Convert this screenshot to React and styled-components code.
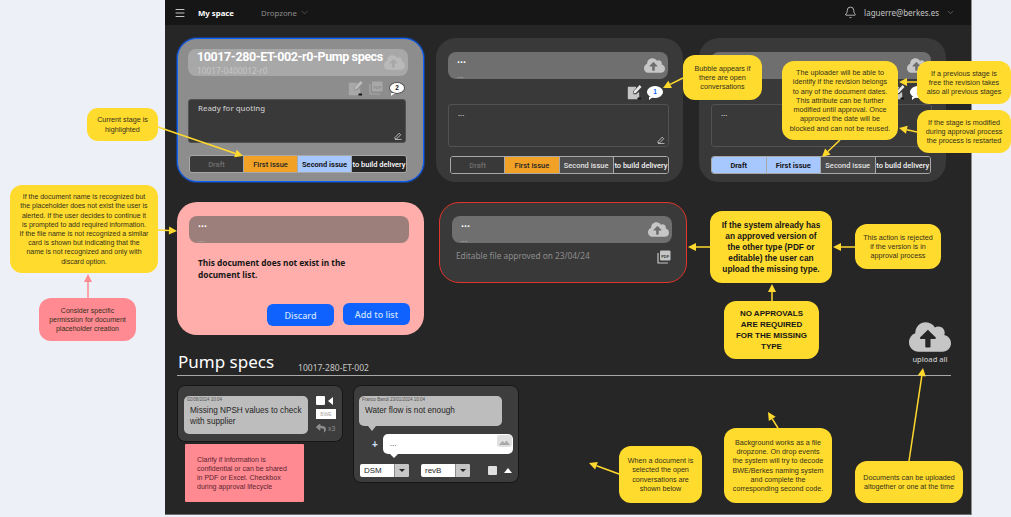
import React from "react";
import styled, { createGlobalStyle } from "styled-components";
import { FaCloudUploadAlt, FaReply } from "react-icons/fa";
import { Bell, ChevronDown, Menu } from "lucide-react";

const Global = createGlobalStyle`
  html, body { margin: 0; padding: 0; background: #edf1f7; }
  body { width: 1011px; height: 517px; overflow: hidden; font-family: "Noto Sans", sans-serif; }
`;

const Page = styled.div`
  position: relative;
  width: 1011px;
  height: 517px;
  overflow: hidden;
`;

const Panel = styled.main`
  box-sizing: border-box;
  margin-left: 165px;
  width: 807px;
  height: 515px;
  background: #262626;
  border-right: 1px solid #8d8d8d;
  border-bottom: 1px solid #6f6f6f;
`;

const Header = styled.header`
  display: flex;
  align-items: center;
  height: 25px;
  padding: 0 16px 0 9px;
  background: #161616;
  color: #fff;
`;

const Brand = styled.strong`
  margin-left: 12px;
  font-size: 7.8px;
  font-weight: 700;
`;

const Nav = styled.span`
  display: flex;
  align-items: center;
  gap: 2px;
  margin-left: 27px;
  font-size: 7.8px;
  color: #8d8d8d;
`;

const Account = styled.div`
  display: flex;
  align-items: center;
  margin-left: auto;
  font-size: 8px;
  color: #c6c6c6;
  gap: 7px;
`;

const Content = styled.div`
  padding: 13px 20px 0 12px;
`;

const CardRow = styled.section`
  display: flex;
  align-items: flex-start;
  gap: ${({ $gap }) => $gap}px;
  margin-top: ${({ $top = 0 }) => $top}px;
`;

const Card = styled.article`
  box-sizing: border-box;
  width: ${({ $w = 247 }) => $w}px;
  height: ${({ $h = 144 }) => $h}px;
  margin-left: ${({ $ml = 0 }) => $ml}px;
  padding: ${({ $pt = 13 }) => $pt}px ${({ $px = 11 }) => $px}px 0;
  border: 1px solid ${({ $line }) => $line || "transparent"};
  border-radius: 20px;
  background: ${({ $bg }) => $bg};
  box-shadow: ${({ $glow }) => ($glow ? "0 0 0 1px rgba(15, 98, 254, 0.4)" : "none")};
`;

const TitleBox = styled.div`
  position: relative;
  box-sizing: border-box;
  width: 220px;
  height: 27px;
  padding: 0 9px;
  border-radius: 8px;
  background: ${({ $bg }) => $bg};
  color: #fff;
`;

const DocName = styled.div`
  font-family: ${({ $big }) => ($big ? "Roboto, sans-serif" : "inherit")};
  font-size: ${({ $big }) => ($big ? 12.5 : 11)}px;
  font-weight: ${({ $big }) => ($big ? 700 : 600)};
  letter-spacing: ${({ $big }) => ($big ? "-0.4px" : "0")};
  line-height: ${({ $big }) => ($big ? 15 : 14)}px;
  white-space: nowrap;
`;

const DocCode = styled.div`
  position: absolute;
  left: 9px;
  bottom: ${({ $big }) => ($big ? 0 : -1)}px;
  font-size: ${({ $big }) => ($big ? 8.3 : 6)}px;
  color: #c6c6c6;
`;

const CloudSlot = styled.span`
  position: absolute;
  right: 3px;
  top: 3px;
  display: flex;
  color: ${({ $c }) => $c};
`;

const Tools = styled.div`
  box-sizing: border-box;
  display: flex;
  justify-content: flex-end;
  align-items: center;
  width: 220px;
  gap: ${({ $gap = 5 }) => $gap}px;
  height: ${({ $h = 25 }) => $h}px;
  padding-right: ${({ $pr = 5 }) => $pr}px;
`;

const Bubble = styled.span`
  position: relative;
  display: flex;
  align-items: center;
  justify-content: center;
  box-sizing: border-box;
  width: 16px;
  height: 12px;
  border-radius: 50%;
  background: #fff;
  border: 1px solid ${({ $ring }) => $ring || "#fff"};
  font: 700 6.5px "Liberation Sans", sans-serif;
  color: ${({ $c }) => $c};

  &::after {
    content: "";
    position: absolute;
    left: 1px;
    bottom: -3px;
    border-top: 3px solid #fff;
    border-right: 4px solid transparent;
  }
`;

const NoteArea = styled.div`
  position: relative;
  box-sizing: border-box;
  width: ${({ $w = 221 }) => $w}px;
  height: ${({ $h }) => $h}px;
  padding: 3px 9px;
  border: 1px solid #525252;
  border-radius: 3px;
  background: #393939;
  font-size: 7.8px;
  font-weight: 500;
  color: #c6c6c6;
`;

const PenMark = styled.span`
  position: absolute;
  right: 3px;
  bottom: 2px;
  display: flex;
`;

const StageBar = styled.div`
  box-sizing: border-box;
  display: grid;
  grid-template-columns: repeat(4, 1fr);
  width: ${({ $w }) => $w}px;
  height: 18px;
  margin: ${({ $mt }) => $mt}px 0 0 ${({ $ml = 0 }) => $ml}px;
  border: 1px solid #a8a8a8;
  border-radius: 3px;
  overflow: hidden;
`;

const Stage = styled.span`
  display: flex;
  align-items: center;
  justify-content: center;
  white-space: nowrap;
  font-family: Roboto, sans-serif;
  font-size: 7.5px;
  font-weight: ${({ $strong }) => ($strong ? 700 : 500)};
  background: ${({ $bg }) => $bg};
  color: ${({ $c }) => $c};
  border-right: 1px solid #a8a8a8;

  &:last-child { border-right: 0; }
`;

const AlertText = styled.p`
  margin: 14px 0 0 9px;
  width: 160px;
  font-size: 8.3px;
  line-height: 12px;
  font-weight: 700;
  color: #161616;
`;

const Actions = styled.div`
  display: flex;
  justify-content: flex-end;
  align-items: flex-start;
  gap: 9px;
  width: 221px;
  margin-top: 22px;
`;

const ActionButton = styled.button`
  width: 67px;
  height: 22px;
  margin-top: ${({ $drop = 0 }) => $drop}px;
  padding: 0;
  border: 0;
  border-radius: 6px;
  background: #0f62fe;
  color: #d0e2ff;
  font: 500 9px "Noto Sans", sans-serif;
`;

const ApprovedRow = styled.div`
  box-sizing: border-box;
  display: flex;
  justify-content: space-between;
  align-items: flex-start;
  width: 220px;
  padding: 7px 1px 0 4px;
  font-size: 8.3px;
  color: #8d8d8d;
`;

const SectionHead = styled.div`
  position: relative;
  display: flex;
  align-items: baseline;
  height: 41px;
  box-sizing: border-box;
  border-bottom: 1px solid #a8a8a8;
  padding: 17px 0 0 1px;
  color: #fff;
`;

const SectionTitle = styled.h2`
  margin: 0;
  font-size: 17px;
  font-weight: 400;
  line-height: 20px;
`;

const SectionCode = styled.span`
  align-self: flex-end;
  margin: 0 0 2px 24px;
  font-size: 8.5px;
  color: #c6c6c6;
`;

const UploadAll = styled.div`
  position: absolute;
  right: 0;
  bottom: 11px;
  display: flex;
  flex-direction: column;
  align-items: center;
  color: #c6c6c6;
  font: 500 7.5px "Noto Sans", sans-serif;
  line-height: 9px;

  svg { margin-bottom: -3px; }
`;

const Threads = styled.section`
  display: flex;
  align-items: flex-start;
  gap: 10px;
  margin-top: 9px;
`;

const Thread = styled.article`
  box-sizing: border-box;
  width: 166px;
  height: ${({ $h }) => $h}px;
  padding: 10px ${({ $px = 6 }) => $px}px;
  border: 1px solid #161616;
  border-radius: 8px;
  background: #3d3d3d;
`;

const ThreadTop = styled.div`
  display: flex;
  gap: 8px;
`;

const Message = styled.div`
  position: relative;
  box-sizing: border-box;
  width: ${({ $w }) => $w}px;
  height: ${({ $h }) => $h}px;
  padding: 1px 3px;
  border-radius: 5px;
  background: #bdbdbd;
  color: #262626;
  font-family: "Liberation Sans", sans-serif;

  ${({ $tail }) => $tail && `
    &::after {
      content: "";
      position: absolute;
      left: 9px;
      bottom: -5px;
      border-left: 4px solid transparent;
      border-right: 4px solid transparent;
      border-top: 5px solid #bdbdbd;
    }
  `}
`;

const Meta = styled.div`
  font-size: 4.5px;
  line-height: 6px;
  color: #525252;
`;

const MsgText = styled.div`
  margin: 2px 0 0 3px;
  font-size: 8.2px;
  line-height: 11px;
`;

const Side = styled.div`
  display: flex;
  flex-direction: column;
  align-items: flex-start;
  color: #8d8d8d;
`;

const CheckRow = styled.div`
  display: flex;
  align-items: center;
  gap: 3px;
`;

const Check = styled.span`
  display: block;
  width: 9px;
  height: 9px;
  border-radius: 1px;
  background: ${({ $bg = "#fff" }) => $bg};
`;

const Triangle = styled.span`
  display: block;
  width: 0;
  height: 0;
  ${({ $dir }) => ($dir === "left"
    ? `border-top: 4px solid transparent; border-bottom: 4px solid transparent; border-right: 5px solid #fff;`
    : `border-left: 4px solid transparent; border-right: 4px solid transparent; border-bottom: 5px solid #fff;`)}
`;

const Tag = styled.span`
  display: flex;
  align-items: center;
  justify-content: center;
  width: 20px;
  height: 10px;
  margin-top: 4px;
  background: #fff;
  color: #a8a8a8;
  font: 5px "Liberation Sans", sans-serif;
`;

const Replies = styled.span`
  display: flex;
  align-items: center;
  gap: 2px;
  margin-top: 4px;
  font: 7px "Liberation Sans", sans-serif;
`;

const ReplyRow = styled.div`
  display: flex;
  align-items: center;
  gap: 5px;
  margin: 8px 0 0 13px;
  color: #d0e2ff;
  font: 700 10px "Liberation Sans", sans-serif;
`;

const ReplyBox = styled.div`
  position: relative;
  box-sizing: border-box;
  width: 131px;
  height: 20px;
  padding: 5px 7px;
  border-radius: 5px;
  background: #fff;
  color: #262626;
  font: 8px "Liberation Sans", sans-serif;

  &::after {
    content: "";
    position: absolute;
    left: 7px;
    bottom: -4px;
    border-left: 4px solid transparent;
    border-right: 4px solid transparent;
    border-top: 4px solid #fff;
  }
`;

const AttachMark = styled.span`
  position: absolute;
  top: 1px;
  right: 1px;
  display: flex;
  align-items: center;
  justify-content: center;
  width: 15px;
  height: 12px;
  border-radius: 3px;
  background: #e0e0e0;
`;

const ThreadBar = styled.div`
  display: flex;
  align-items: center;
  margin: 10px 0 0 1px;
`;

const Select = styled.span`
  display: grid;
  grid-template-columns: 1fr 15px;
  width: 49px;
  height: 13px;
  margin-right: 12px;
  border-radius: 2px;
  overflow: hidden;
  background: #fff;
  color: #262626;
  font: 8px/13px "Liberation Sans", sans-serif;
  padding-left: 4px;
  box-sizing: border-box;
`;

const SelectArrow = styled.i`
  display: flex;
  align-items: center;
  justify-content: center;
  background: #c6c6c6;
  border-left: 1px solid #8d8d8d;

  &::after {
    content: "";
    border-left: 3px solid transparent;
    border-right: 3px solid transparent;
    border-top: 3px solid #262626;
  }
`;

const BarEnd = styled.div`
  display: flex;
  align-items: center;
  gap: 7px;
  margin-left: 6px;
`;

const Callout = styled.div`
  position: absolute;
  left: ${({ $x }) => $x}px;
  top: ${({ $y }) => $y}px;
  width: ${({ $w }) => $w}px;
  height: ${({ $h }) => $h}px;
  box-sizing: border-box;
  display: flex;
  align-items: center;
  justify-content: center;
  text-align: center;
  padding: 0 2px;
  border-radius: ${({ $r = 11 }) => $r}px;
  background: ${({ $bg = "#ffdb2e" }) => $bg};
  color: ${({ $bold }) => ($bold ? "#161616" : "#33301a")};
  font-family: "Liberation Sans", sans-serif;
  font-size: ${({ $fs = 7.2 }) => $fs}px;
  font-weight: ${({ $bold }) => ($bold ? 700 : 400)};
  line-height: ${({ $lh = 9.2 }) => $lh}px;
  white-space: pre-line;
`;

const StickyNote = styled(Callout)`
  justify-content: flex-start;
  text-align: left;
  padding-left: 12px;
  border-radius: 1px;
  background: #ff8a92;
  color: #5a2430;
`;

const Arrows = styled.svg`
  position: absolute;
  inset: 0;
  pointer-events: none;
`;

const STAGES = ["Draft", "First issue", "Second issue", "to build delivery"];

const Cloud = ({ size = 21 }) => <FaCloudUploadAlt size={size} />;

const EditIcon = ({ color = "#c6c6c6", pen = "#e8e8e8" }) => (
  <svg width="15" height="16" viewBox="0 0 15 16">
    <path d="M1.5 3.5h7L5.5 7v4h4l2-2v5.5h-10z" fill={color} stroke={color} strokeWidth="1.4" strokeLinejoin="round" />
    <path d="M6.5 9.5l.5-2.5L12.6 1l1.9 1.9L8.9 9z" fill={pen} />
    <rect x="10.5" y="13.5" width="3.5" height="2" fill="#161616" />
  </svg>
);

const PdfIcon = ({ color = "#8d8d8d", ink = "#393939" }) => (
  <svg width="14" height="14" viewBox="0 0 14 14">
    <path d="M1 3v10h10" fill="none" stroke={color} strokeWidth="1.2" />
    <rect x="3" y="0.5" width="10.5" height="10" rx="1" fill={color} />
    <text x="8.2" y="7.5" textAnchor="middle" fontSize="4" fontWeight="700" fontFamily="Liberation Sans" fill={ink}>PDF</text>
  </svg>
);

const Pen = () => (
  <svg width="8" height="8" viewBox="0 0 8 8">
    <path d="M1 5.5L5.2 1.2l1.5 1.5L2.5 7H1zM1 7.6h6.5" fill="none" stroke="#c6c6c6" strokeWidth="0.9" />
  </svg>
);

const Stages = ({ cells, mt, ml, w }) => (
  <StageBar $mt={mt} $ml={ml} $w={w}>
    {STAGES.map((s, i) => (
      <Stage key={s} $bg={cells[i].bg} $c={cells[i].c} $strong={cells[i].strong}>{s}</Stage>
    ))}
  </StageBar>
);

const DRAFT_OFF = { bg: "#393939", c: "#6f6f6f" };
const ORANGE = { bg: "#f1a125", c: "#262626" };
const BLUE = { bg: "#a6c8ff", c: "#161616", strong: true };
const PLAIN = { bg: "#4c4c4c", c: "#e0e0e0" };
const DARK = { bg: "#393939", c: "#f4f4f4" };

const NOTES = [
  { x: 87, y: 108, w: 71, h: 33, text: "Current stage is\nhighlighted" },
  { x: 10, y: 185, w: 148, h: 88, r: 12, fs: 7, text: "If the document name is recognized but\nthe placeholder does not exist the user is\nalerted. If the user decides to continue it\nis prompted to add required information.\nIf the file name is not recognized a similar\ncard is shown but indicating that the\nname is not recognized and only with\ndiscard option." },
  { x: 39, y: 298, w: 97, h: 43, r: 12, fs: 7, bg: "#ff8a92", text: "Consider specific\npermission for document\nplaceholder creation" },
  { x: 683, y: 55, w: 79, h: 45, r: 12, text: "Bubble appears if\nthere are open\nconversations" },
  { x: 782, y: 61, w: 116, h: 79, r: 12, text: "The uploader will be able to\nidentify if the revision belongs\nto any of the document dates.\nThis attribute can be further\nmodified until approval. Once\napproved the date will be\nblocked and can not be reused." },
  { x: 917, y: 61, w: 94, h: 43, r: 12, text: "If a previous stage is\nfree the revision takes\nalso all previous stages" },
  { x: 917, y: 110, w: 94, h: 43, r: 12, text: "If the stage is modified\nduring approval process\nthe process is restarted" },
  { x: 710, y: 211, w: 122, h: 72, r: 12, bold: true, fs: 8.3, lh: 11, text: "If the system already has\nan approved version of\nthe other type (PDF or\neditable) the user can\nupload the missing type." },
  { x: 855, y: 224, w: 86, h: 45, r: 12, text: "This action is rejected\nif the version is in\napproval process" },
  { x: 724, y: 301, w: 95, h: 58, r: 12, bold: true, fs: 8, lh: 11, text: "NO APPROVALS\nARE REQUIRED\nFOR THE MISSING\nTYPE" },
  { x: 619, y: 446, w: 83, h: 57, r: 12, text: "When a document is\nselected the open\nconversations are\nshown below" },
  { x: 724, y: 428, w: 108, h: 75, r: 12, text: "Background works as a file\ndropzone. On drop events\nthe system will try to decode\nBWE/Berkes naming system\nand complete the\ncorresponding second code." },
  { x: 855, y: 461, w: 108, h: 42, r: 12, text: "Documents can be uploaded\naltogether or one at the time" },
];

const ARROWS = [
  [158, 127, 243, 156],
  [158, 230, 177, 231],
  [88, 298, 88, 274, "#ff8a92"],
  [683, 78, 663, 88],
  [917, 82, 899, 82],
  [917, 132, 899, 128],
  [840, 140, 822, 157],
  [710, 247, 688, 247],
  [855, 247, 833, 247],
  [772, 301, 772, 284],
  [909, 461, 923, 368],
  [778, 428, 768, 412],
  [619, 474, 589, 463],
];

// line plus a filled head, tip at x2,y2
const Arrow = ({ a }) => {
  const [x1, y1, x2, y2, color = "#ffd92e"] = a;
  const ang = Math.atan2(y2 - y1, x2 - x1);
  const len = 8;
  const bx = x2 - len * Math.cos(ang);
  const by = y2 - len * Math.sin(ang);
  const nx = 4 * Math.sin(ang);
  const ny = 4 * Math.cos(ang);
  return (
    <g>
      <line x1={x1} y1={y1} x2={bx} y2={by} stroke={color} strokeWidth="1.5" />
      <polygon points={`${x2},${y2} ${bx + nx},${by - ny} ${bx - nx},${by + ny}`} fill={color} />
    </g>
  );
};

export default function App() {
  return (
    <Page>
      <Global />
      <Panel>
        <Header>
          <Menu size={12} strokeWidth={1.5} />
          <Brand>My space</Brand>
          <Nav>
            Dropzone <ChevronDown size={11} strokeWidth={1} />
          </Nav>
          <Account>
            <Bell size={13} strokeWidth={1.2} color="#fff" />
            laguerre@berkes.es
            <ChevronDown size={9} strokeWidth={1} />
          </Account>
        </Header>

        <Content>
          <CardRow $gap={12}>
            <Card $bg="#8d8d8d" $line="#0f62fe" $glow $pt={10} $px={10}>
              <TitleBox $bg="#a8a8a8">
                <DocName $big>10017-280-ET-002-r0-Pump specs</DocName>
                <DocCode $big>10017-0400012-r0</DocCode>
                <CloudSlot $c="#b9b9b9"><Cloud /></CloudSlot>
              </TitleBox>
              <Tools $h={23} $gap={6} $pr={3}>
                <EditIcon color="#a8a8a8" pen="#bdbdbd" />
                <PdfIcon color="#a8a8a8" ink="#8d8d8d" />
                <Bubble $ring="#525252" $c="#161616">2</Bubble>
              </Tools>
              <NoteArea $h={44} $w={218}>
                Ready for quoting
                <PenMark><Pen /></PenMark>
              </NoteArea>
              <Stages mt={12} ml={1} w={218} cells={[DRAFT_OFF, ORANGE, BLUE, { bg: "#262626", c: "#fff" }]} />
            </Card>

            <Card $bg="#393939">
              <TitleBox $bg="#6f6f6f">
                <DocName>...</DocName>
                <DocCode>....</DocCode>
                <CloudSlot $c="#c6c6c6"><Cloud /></CloudSlot>
              </TitleBox>
              <Tools>
                <EditIcon />
                <Bubble $c="#0f62fe">1</Bubble>
              </Tools>
              <NoteArea $h={43}>
                ...
                <PenMark><Pen /></PenMark>
              </NoteArea>
              <Stages mt={9} ml={2} w={219} cells={[DRAFT_OFF, ORANGE, PLAIN, DARK]} />
            </Card>

            <Card $bg="#393939" $ml={4}>
              <TitleBox $bg="#6f6f6f">
                <DocName>...</DocName>
                <DocCode>....</DocCode>
                <CloudSlot $c="#c6c6c6"><Cloud /></CloudSlot>
              </TitleBox>
              <Tools>
                <EditIcon />
                <Bubble $c="#0f62fe">1</Bubble>
              </Tools>
              <NoteArea $h={43}>
                ...
                <PenMark><Pen /></PenMark>
              </NoteArea>
              <Stages mt={9} w={220} cells={[BLUE, BLUE, PLAIN, DARK]} />
            </Card>
          </CardRow>

          <CardRow $gap={15} $top={20}>
            <Card $bg="#ffaeab" $h={133}>
              <TitleBox $bg="#9c7f7a">
                <DocName>...</DocName>
                <DocCode>....</DocCode>
              </TitleBox>
              <AlertText>This document does not exist in the document list.</AlertText>
              <Actions>
                <ActionButton $drop={1}>Discard</ActionButton>
                <ActionButton>Add to list</ActionButton>
              </Actions>
            </Card>

            <Card $bg="#393939" $w={248} $h={81} $px={12} $line="#e0352b">
              <TitleBox $bg="#6f6f6f">
                <DocName>...</DocName>
                <DocCode>....</DocCode>
                <CloudSlot $c="#c6c6c6"><Cloud /></CloudSlot>
              </TitleBox>
              <ApprovedRow>
                Editable file approved on 23/04/24
                <PdfIcon color="#c6c6c6" />
              </ApprovedRow>
            </Card>
          </CardRow>

          <SectionHead>
            <SectionTitle>Pump specs</SectionTitle>
            <SectionCode>10017-280-ET-002</SectionCode>
            <UploadAll>
              <Cloud size={42} />
              upload all
            </UploadAll>
          </SectionHead>

          <Threads>
            <Thread $h={57}>
              <ThreadTop>
                <Message $w={126} $h={38}>
                  <Meta>02/08/2024 10:04</Meta>
                  <MsgText>Missing NPSH values to check with supplier</MsgText>
                </Message>
                <Side>
                  <CheckRow><Check /><Triangle $dir="left" /></CheckRow>
                  <Tag>BWE</Tag>
                  <Replies><FaReply size={10} />x3</Replies>
                </Side>
              </ThreadTop>
            </Thread>
            <Thread $h={98} $px={5}>
              <Message $w={143} $h={30} $tail>
                <Meta>Franco Bandi 23/01/2024 10:04</Meta>
                <MsgText>Water flow is not enough</MsgText>
              </Message>
              <ReplyRow>
                +
                <ReplyBox>
                  ...
                  <AttachMark>
                    <svg width="11" height="9" viewBox="0 0 11 9"><path d="M0 8l3.5-4 2 2 2-2.5L11 8z" fill="#a8a8a8" /></svg>
                  </AttachMark>
                </ReplyBox>
              </ReplyRow>
              <ThreadBar>
                <Select>DSM<SelectArrow /></Select>
                <Select>revB<SelectArrow /></Select>
                <BarEnd><Check $bg="#e0e0e0" /><Triangle $dir="up" /></BarEnd>
              </ThreadBar>
            </Thread>
          </Threads>
        </Content>
      </Panel>

      <StickyNote $x={185} $y={444} $w={119} $h={58} $lh={9} $fs={7}>
        {"Clarify if information is\nconfidential or can be shared\nin PDF or Excel. Checkbox\nduring approval lifecycle"}
      </StickyNote>

      {NOTES.map((n) => (
        <Callout key={n.text} $x={n.x} $y={n.y} $w={n.w} $h={n.h} $r={n.r} $bg={n.bg} $fs={n.fs} $lh={n.lh} $bold={n.bold}>
          {n.text}
        </Callout>
      ))}

      <Arrows width="1011" height="517" viewBox="0 0 1011 517">
        {ARROWS.map((a, i) => <Arrow key={i} a={a} />)}
      </Arrows>
    </Page>
  );
}
